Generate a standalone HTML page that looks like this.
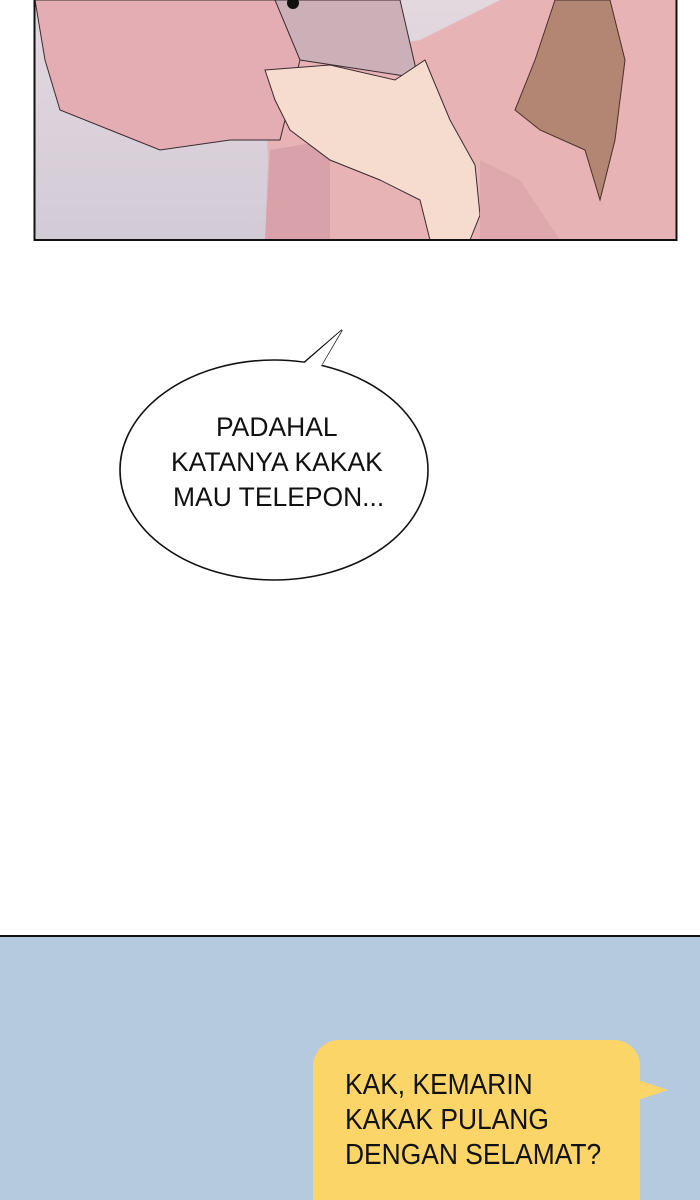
<!DOCTYPE html>
<html><head><style>
body{margin:0;width:700px;height:1200px;background:#fff;position:relative;overflow:hidden;font-family:"Liberation Sans",sans-serif}
.t{position:absolute;white-space:nowrap;color:#111;transform-origin:0 0}
</style></head><body>
<svg style="position:absolute;left:0;top:0" width="700" height="1200">
 <defs><linearGradient id="bg" x1="0" y1="0" x2="0" y2="1"><stop offset="0" stop-color="#e4d8df"/><stop offset="1" stop-color="#d2cbd6"/></linearGradient></defs>
 <rect x="35" y="0" width="641" height="240" fill="url(#bg)"/>
 <path d="M265 90 L300 60 L420 40 L500 0 L676 0 L676 240 L265 240 L268 160 Z" fill="#e8b3b5"/>
 <path d="M35 0 L290 0 L300 60 L280 140 L230 140 L160 150 L110 130 L60 110 L45 60 Z" fill="#e3adb3" stroke="#3a2a30" stroke-width="1"/>
 <path d="M270 150 L330 140 L330 240 L265 240 Z" fill="#d9a2aa"/>
 <path d="M275 0 L400 0 L418 78 L300 60 Z" fill="#cbb1b7" stroke="#3a2a30" stroke-width="1"/>
 <circle cx="293" cy="3" r="6" fill="#111"/>
 <path d="M555 0 L610 0 L625 60 L615 140 L600 200 L585 150 L540 130 L515 110 L535 60 Z" fill="#b38573" stroke="#4a3028" stroke-width="1"/>
 <path d="M265 70 L330 65 L395 80 L425 60 L450 120 L475 165 L480 215 L470 240 L430 240 L420 200 L380 180 L330 160 L290 130 L275 100 Z" fill="#f5dccf" stroke="#3a2a30" stroke-width="1"/>
 <path d="M480 160 L520 180 L560 240 L480 240 Z" fill="#dfa8ad"/>
 <rect x="34.5" y="-2" width="642" height="242" fill="none" stroke="#111" stroke-width="2"/>
 <path d="M300 366 L342 330 L322 364" fill="#fff" stroke="#111" stroke-width="1.6"/>
 <ellipse cx="274" cy="470" rx="154" ry="110" fill="#fff" stroke="#111" stroke-width="1.6"/>
 <path d="M300 367 L342 330 L321 366" fill="#fff" stroke="none"/>
 <rect x="0" y="936" width="700" height="264" fill="#b6cadf"/>
 <line x1="0" y1="936" x2="700" y2="936" stroke="#111" stroke-width="2"/>
 <rect x="313" y="1040" width="327" height="200" rx="26" fill="#fcd568"/>
 <path d="M638 1080 L668 1090 L638 1100 Z" fill="#fcd568"/>
</svg>
<div class="t" style="left:216px;top:412px;font-size:27px;transform:scaleX(0.98)">PADAHAL</div>
<div class="t" style="left:171px;top:447px;font-size:27px;transform:scaleX(0.98)">KATANYA KAKAK</div>
<div class="t" style="left:173px;top:482px;font-size:27px;transform:scaleX(0.98)">MAU TELEPON...</div>
<div class="t" style="left:345px;top:1069px;font-size:29px;transform:scaleX(0.91)">KAK, KEMARIN</div>
<div class="t" style="left:345px;top:1104px;font-size:29px;transform:scaleX(0.91)">KAKAK PULANG</div>
<div class="t" style="left:345px;top:1139px;font-size:29px;transform:scaleX(0.91)">DENGAN SELAMAT?</div>
</body></html>
